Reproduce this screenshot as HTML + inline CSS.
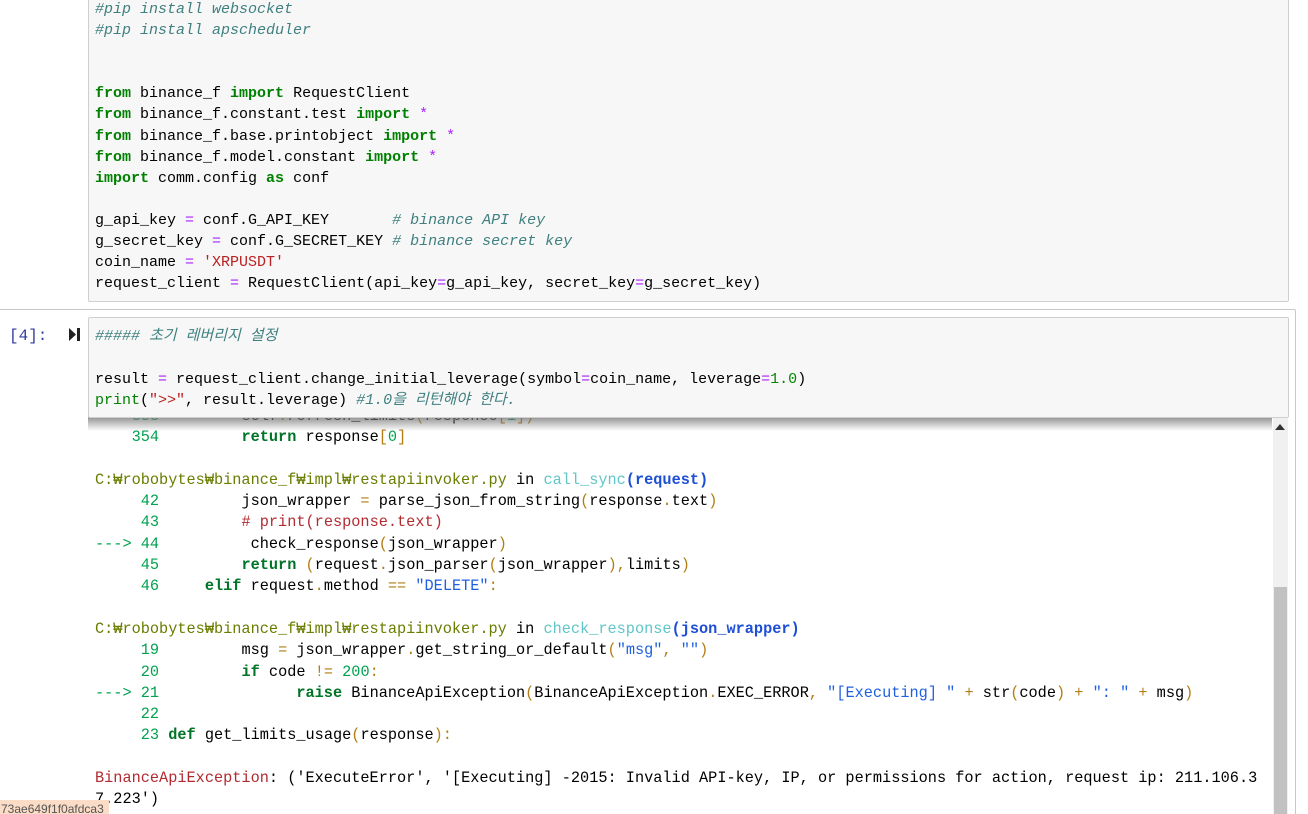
<!DOCTYPE html>
<html><head><meta charset="utf-8"><style>
html{overflow:hidden;height:814px}
body{margin:0;width:1308px;height:814px;overflow:hidden;background:#fff;position:relative;font-family:"Liberation Mono","Noto Sans CJK KR",monospace;font-size:15px;color:#000}
pre{margin:0;font:inherit;white-space:pre;position:absolute;left:95px}
.c1{position:absolute;left:88px;top:-2px;width:1199px;height:302px;background:#f7f7f7;border:1px solid #cfcfcf;border-radius:2px}
.outer{position:absolute;left:-2px;top:309px;width:1296px;height:510px;border:1px solid #c8c8c8;border-radius:2px}
.c2{position:absolute;left:88px;top:317px;width:1199px;height:99px;background:#f7f7f7;border:1px solid #cfcfcf;border-radius:2px;z-index:3}
.shadow{position:absolute;left:88px;top:417px;width:1184px;height:14px;background:linear-gradient(#777,rgba(255,255,255,0));z-index:2;opacity:.8}
.k{color:#008000;font-weight:bold}.cm{color:#408080;font-style:italic}.s{color:#ba2121}.o{color:#aa22ff}.n{color:#080}
.g{color:#00a250}.kg{color:#007427;font-weight:bold}.y{color:#6b7d00}.b{color:#b27d12}.cy{color:#60c6c8}.blb{color:#1d4fd6;font-weight:bold}.r{color:#b22b31}.sb{color:#2060e0}
.prompt{position:absolute;left:9px;top:327px;color:#303f9f;font-size:16px}
.sc{position:absolute;left:1273px;top:417px;width:15px;height:400px;background:#f0f0f0}
.th{position:absolute;left:1274px;top:587px;width:13px;height:230px;background:#c1c1c1}
.tag{position:absolute;left:0;top:800px;width:108px;height:16px;background:#fbdcc6;color:#555;font:12px "Liberation Sans",sans-serif;line-height:18px;padding-left:1px;overflow:hidden;z-index:5}
</style></head><body>
<div class="c1"></div>
<pre style="top:-1px;line-height:21.1px"><span class="cm">#pip install websocket</span>
<span class="cm">#pip install apscheduler</span>


<span class="k">from</span> binance_f <span class="k">import</span> RequestClient
<span class="k">from</span> binance_f.constant.test <span class="k">import</span> <span class="o">*</span>
<span class="k">from</span> binance_f.base.printobject <span class="k">import</span> <span class="o">*</span>
<span class="k">from</span> binance_f.model.constant <span class="k">import</span> <span class="o">*</span>
<span class="k">import</span> comm.config <span class="k">as</span> conf

g_api_key <span class="o">=</span> conf.G_API_KEY       <span class="cm"># binance API key</span>
g_secret_key <span class="o">=</span> conf.G_SECRET_KEY <span class="cm"># binance secret key</span>
coin_name <span class="o">=</span> <span class="s">'XRPUSDT'</span>
request_client <span class="o">=</span> RequestClient(api_key<span class="o">=</span>g_api_key, secret_key<span class="o">=</span>g_secret_key)</pre>
<div class="outer"></div>
<div class="prompt">[4]:</div>
<svg style="position:absolute;left:68px;top:327px" width="13" height="15"><path d="M1 1 L8 7.5 L1 14Z" fill="#222"/><rect x="9" y="1" width="3" height="13" fill="#222"/></svg>
<div class="c2"></div>
<pre style="top:326px;line-height:21.3px;z-index:4"><span class="cm">##### 초기 레버리지 설정</span>

result <span class="o">=</span> request_client.change_initial_leverage(symbol<span class="o">=</span>coin_name, leverage<span class="o">=</span><span class="n">1.0</span>)
<span class="k" style="font-weight:normal">print</span>(<span class="s">"&gt;&gt;"</span>, result.leverage) <span class="cm">#1.0을 리턴해야 한다.</span></pre>
<div class="shadow"></div>
<pre style="top:406px;line-height:21.3px;z-index:1;font-size:15.25px">    <span class="g">353</span>         self<span class="b">.</span>refresh_limits<span class="b">(</span>response<span class="b">[</span><span class="g">1</span><span class="b">])</span>
    <span class="g">354</span>         <span class="kg">return</span> response<span class="b">[</span><span class="g">0</span><span class="b">]</span>

<span class="y">C:₩robobytes₩binance_f₩impl₩restapiinvoker.py</span> in <span class="cy">call_sync</span><span class="blb">(request)</span>
     <span class="g">42</span>         json_wrapper <span class="b">=</span> parse_json_from_string<span class="b">(</span>response<span class="b">.</span>text<span class="b">)</span>
     <span class="g">43</span>         <span class="r"># print(response.text)</span>
<span class="g">---&gt; 44</span>         <span class="b"> </span>check_response<span class="b">(</span>json_wrapper<span class="b">)</span>
     <span class="g">45</span>         <span class="kg">return</span> <span class="b">(</span>request<span class="b">.</span>json_parser<span class="b">(</span>json_wrapper<span class="b">),</span>limits<span class="b">)</span>
     <span class="g">46</span>     <span class="kg">elif</span> request<span class="b">.</span>method <span class="b">==</span> <span class="sb">"DELETE"</span><span class="b">:</span>

<span class="y">C:₩robobytes₩binance_f₩impl₩restapiinvoker.py</span> in <span class="cy">check_response</span><span class="blb">(json_wrapper)</span>
     <span class="g">19</span>         msg <span class="b">=</span> json_wrapper<span class="b">.</span>get_string_or_default<span class="b">(</span><span class="sb">"msg"</span><span class="b">,</span> <span class="sb">""</span><span class="b">)</span>
     <span class="g">20</span>         <span class="kg">if</span> code <span class="b">!=</span> <span class="g">200</span><span class="b">:</span>
<span class="g">---&gt; 21</span>               <span class="kg">raise</span> BinanceApiException<span class="b">(</span>BinanceApiException<span class="b">.</span>EXEC_ERROR<span class="b">,</span> <span class="sb">"[Executing] "</span> <span class="b">+</span> str<span class="b">(</span>code<span class="b">)</span> <span class="b">+</span> <span class="sb">": "</span> <span class="b">+</span> msg<span class="b">)</span>
     <span class="g">22</span>
     <span class="g">23</span> <span class="kg">def</span> get_limits_usage<span class="b">(</span>response<span class="b">):</span>

<span class="r">BinanceApiException</span>: ('ExecuteError', '[Executing] -2015: Invalid API-key, IP, or permissions for action, request ip: 211.106.3
7.223')</pre>
<div class="sc"></div><div class="th"></div>
<svg style="position:absolute;left:1275px;top:424px" width="10" height="6"><path d="M0 6 L5 0 L10 6Z" fill="#333"/></svg>
<div class="tag">73ae649f1f0afdca3</div>
</body></html>
